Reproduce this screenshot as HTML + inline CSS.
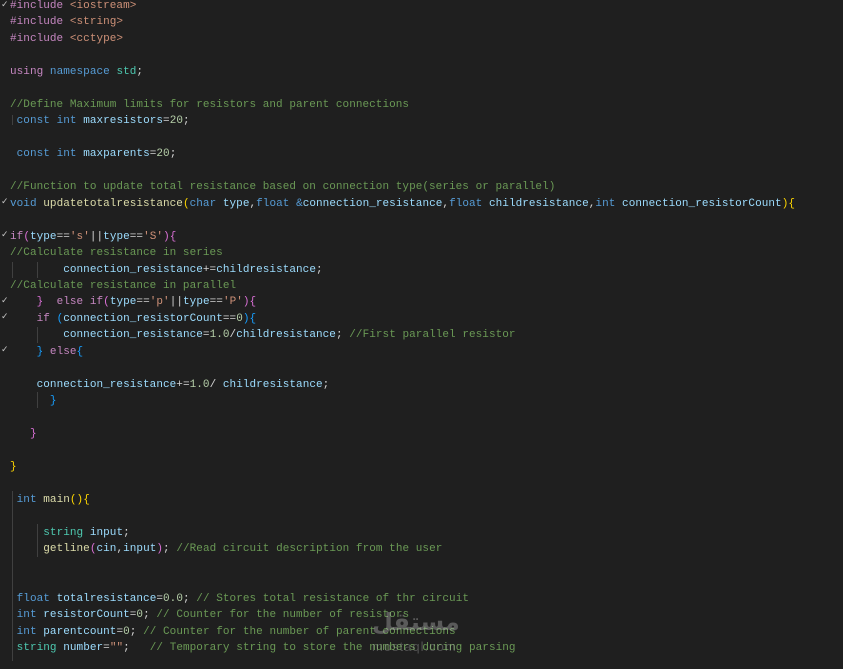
<!DOCTYPE html>
<html><head><meta charset="utf-8"><style>
html,body{margin:0;padding:0;background:#1f1f1f;width:843px;height:669px;overflow:hidden}
pre{margin:0;position:absolute;left:10px;top:-2px;font-family:"Liberation Mono",monospace;font-size:11px;line-height:16.47px;color:#d4d4d4;white-space:pre;letter-spacing:0.05px}
.k{color:#569cd6}.c{color:#c586c0}.s{color:#ce9178}.m{color:#6a9955}.v{color:#9cdcfe}.f{color:#dcdcaa}.n{color:#b5cea8}.t{color:#4ec9b0}.y{color:#ffd700}.p{color:#da70d6}.b{color:#179fff}
.chk{position:absolute;left:1px;color:#c5c5c5;font-family:"DejaVu Sans",sans-serif;font-size:9px}
.g{position:absolute;width:1px;background:#404040}
.wm{position:absolute;left:372px;top:608px;color:rgba(200,200,200,0.35);font-family:"DejaVu Sans",sans-serif;font-size:24px;font-weight:bold}
.wm2{position:absolute;left:372px;top:639px;color:rgba(200,200,200,0.3);font-family:"Liberation Sans",sans-serif;font-size:13px;letter-spacing:1px}
</style></head><body>
<div class="chk" style="top:0px">✓</div>
<div class="chk" style="top:197px">✓</div>
<div class="chk" style="top:230px">✓</div>
<div class="chk" style="top:296px">✓</div>
<div class="chk" style="top:312px">✓</div>
<div class="chk" style="top:345px">✓</div>
<div class="g" style="left:12px;top:115px;height:10px"></div>
<div class="g" style="left:12px;top:262px;height:16px"></div>
<div class="g" style="left:37px;top:262px;height:16px"></div>
<div class="g" style="left:37px;top:327px;height:16px"></div>
<div class="g" style="left:12px;top:491px;height:170px"></div>
<div class="g" style="left:37px;top:524px;height:33px"></div>
<div class="g" style="left:37px;top:392px;height:16px"></div>
<pre><span class="c">#include</span> <span class="s">&lt;iostream&gt;</span>
<span class="c">#include</span> <span class="s">&lt;string&gt;</span>
<span class="c">#include</span> <span class="s">&lt;cctype&gt;</span>

<span class="c">using</span> <span class="k">namespace</span> <span class="t">std</span>;

<span class="m">//Define Maximum limits for resistors and parent connections</span>
 <span class="k">const</span> <span class="k">int</span> <span class="v">maxresistors</span>=<span class="n">20</span>;

 <span class="k">const</span> <span class="k">int</span> <span class="v">maxparents</span>=<span class="n">20</span>;

<span class="m">//Function to update total resistance based on connection type(series or parallel)</span>
<span class="k">void</span> <span class="f">updatetotalresistance</span><span class="y">(</span><span class="k">char</span> <span class="v">type</span>,<span class="k">float</span> <span class="k">&amp;</span><span class="v">connection_resistance</span>,<span class="k">float</span> <span class="v">childresistance</span>,<span class="k">int</span> <span class="v">connection_resistorCount</span><span class="y">){</span>

<span class="c">if</span><span class="p">(</span><span class="v">type</span>==<span class="s">'s'</span>||<span class="v">type</span>==<span class="s">'S'</span><span class="p">){</span>
<span class="m">//Calculate resistance in series</span>
        <span class="v">connection_resistance</span>+=<span class="v">childresistance</span>;
<span class="m">//Calculate resistance in parallel</span>
    <span class="p">}</span>  <span class="c">else</span> <span class="c">if</span><span class="p">(</span><span class="v">type</span>==<span class="s">'p'</span>||<span class="v">type</span>==<span class="s">'P'</span><span class="p">){</span>
    <span class="c">if</span> <span class="b">(</span><span class="v">connection_resistorCount</span>==<span class="n">0</span><span class="b">){</span>
        <span class="v">connection_resistance</span>=<span class="n">1.0</span>/<span class="v">childresistance</span>; <span class="m">//First parallel resistor</span>
    <span class="b">}</span> <span class="c">else</span><span class="b">{</span>

    <span class="v">connection_resistance</span>+=<span class="n">1.0</span>/ <span class="v">childresistance</span>;
      <span class="b">}</span>

   <span class="p">}</span>

<span class="y">}</span>

 <span class="k">int</span> <span class="f">main</span><span class="y">(){</span>

     <span class="t">string</span> <span class="v">input</span>;
     <span class="f">getline</span><span class="p">(</span><span class="v">cin</span>,<span class="v">input</span><span class="p">)</span>; <span class="m">//Read circuit description from the user</span>


 <span class="k">float</span> <span class="v">totalresistance</span>=<span class="n">0.0</span>; <span class="m">// Stores total resistance of thr circuit</span>
 <span class="k">int</span> <span class="v">resistorCount</span>=<span class="n">0</span>; <span class="m">// Counter for the number of resistors</span>
 <span class="k">int</span> <span class="v">parentcount</span>=<span class="n">0</span>; <span class="m">// Counter for the number of parent connections</span>
 <span class="t">string</span> <span class="v">number</span>=<span class="s">""</span>;   <span class="m">// Temporary string to store the numbers during parsing</span></pre>
<div class="wm">مستقل</div>
<div class="wm2">mostaql.com</div>
</body></html>
